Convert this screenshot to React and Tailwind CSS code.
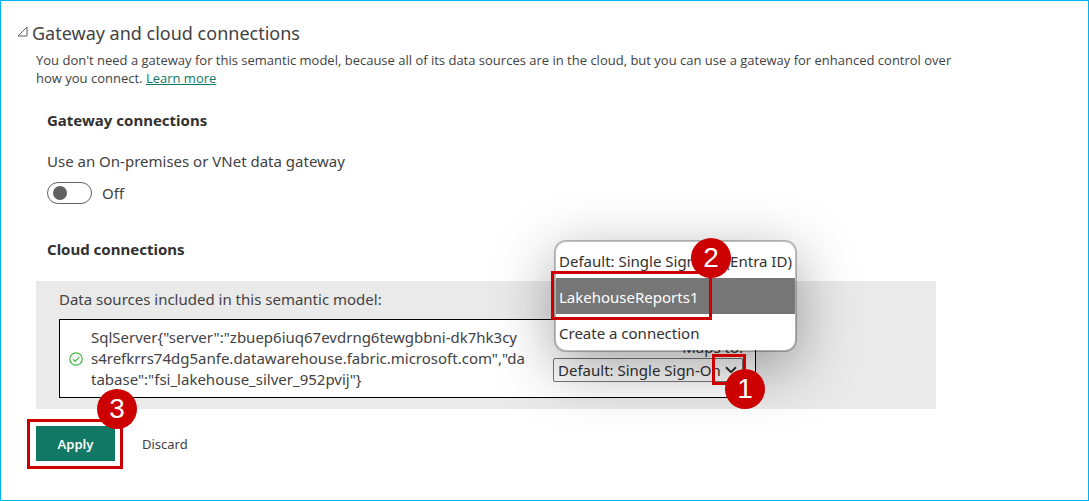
import { useState } from "react";

const CONNECTIONS = [
  "Default: Single Sign-On (Entra ID)",
  "LakehouseReports1",
  "Create a connection",
];

function Badge({ n, className }) {
  return (
    <span
      className={`pointer-events-none absolute z-30 flex size-10 items-center justify-center rounded-full bg-[#cc0000] font-['Liberation_Sans',sans-serif] text-[28px] leading-none text-white ${className}`}
    >
      {n}
    </span>
  );
}

function Frame({ className }) {
  return (
    <span
      className={`pointer-events-none absolute z-20 border-3 border-[#cc0000] ${className}`}
    />
  );
}

function ConnectionPicker() {
  const [active, setActive] = useState(1);
  return (
    <div className="relative w-[190px]">
      <label htmlFor="maps-to" className="block text-right text-[15px] leading-[22px]">
        Maps to:
      </label>
      <select
        id="maps-to"
        className="block h-6 w-full appearance-none rounded-xs border border-[#767676] bg-transparent pl-1 text-[15px] leading-5 text-[#323130]"
      >
        <option>Default: Single Sign-On</option>
      </select>
      <svg
        viewBox="0 0 12 8"
        className="pointer-events-none absolute right-[6px] bottom-[8px] h-2 w-3"
        fill="none"
        stroke="#323130"
        strokeWidth="2"
      >
        <path d="M1 1.2 6 6.2 11 1.2" />
      </svg>
      <Frame className="-right-[3px] -bottom-[3px] h-[31px] w-[34px]" />
      <Badge n={1} className="-right-[22px] -bottom-[27px]" />

      <div
        role="listbox"
        aria-label="Connections"
        className="absolute bottom-[30px] left-px z-10 w-[243px] rounded-xl border-2 border-black/25 bg-white bg-clip-padding shadow-[0_16px_60px_rgba(0,0,0,0.36)]"
      >
        {CONNECTIONS.map((name, i) => (
          <button
            key={name}
            type="button"
            role="option"
            aria-selected={i === active}
            onClick={() => setActive(i)}
            className={`block h-9 w-full pt-0.5 pl-[3px] text-left text-[15px] whitespace-nowrap ${
              i === active ? "bg-[#767676] text-white" : "text-[#323130]"
            }`}
          >
            {name}
          </button>
        ))}
        <Frame className="top-[29px] -left-[5px] h-[49px] w-[161px]" />
        <Badge n={2} className="-top-1 left-[135px]" />
      </div>
    </div>
  );
}

export default function App() {
  const [gateway, setGateway] = useState(false);
  return (
    <main className="min-h-screen border border-[#00b0f0] bg-white pt-5 pr-[152px] pb-8 pl-4 font-['Noto_Sans','Open_Sans',sans-serif] text-[#424242]">
      <h1 className="flex items-center gap-1 text-lg leading-6">
        <svg viewBox="0 0 11 11" className="mb-1 size-[11px]" fill="none" stroke="#606060">
          <path d="M10 1V10H1Z" />
        </svg>
        Gateway and cloud connections
      </h1>

      <p className="mt-[6px] pl-[19px] font-['Open_Sans','Noto_Sans',sans-serif] text-[13px] leading-[18px] lg:whitespace-nowrap">
        You don't need a gateway for this semantic model, because all of its data sources are in the
        cloud, but you can use a gateway for enhanced control over
        <br />
        how you connect.{" "}
        <a href="#learn" className="text-[#117865] underline">
          Learn more
        </a>
      </p>

      <section className="mt-[23px] pl-[30px]">
        <h2 className="text-[15px] leading-5 font-bold text-[#323130]">Gateway connections</h2>
        <p className="mt-[21px] text-[15px] leading-5">Use an On-premises or VNet data gateway</p>
        <label className="mt-[11px] flex w-fit items-center gap-[10px] text-[15px] leading-5">
          <input
            type="checkbox"
            role="switch"
            checked={gateway}
            onChange={(e) => setGateway(e.target.checked)}
            className="peer sr-only"
          />
          <span className="flex h-[22px] w-[45px] items-center rounded-full border border-[#616161] px-[5px] peer-checked:justify-end">
            <span className="size-[14px] rounded-full bg-[#616161]" />
          </span>
          {gateway ? "On" : "Off"}
        </label>
      </section>

      <h2 className="mt-[35px] pl-[30px] text-[15px] leading-5 font-bold text-[#323130]">
        Cloud connections
      </h2>

      <section className="mt-[22px] ml-[19px] bg-[#eaeaea] px-[23px] pt-2 pb-[11px]">
        <h3 className="text-[15px] leading-5">Data sources included in this semantic model:</h3>
        <div className="mt-[10px] flex w-fit items-center border border-black bg-white py-[7px] pr-[12px] pl-[9px]">
          <svg viewBox="0 0 14 14" className="size-[14px] shrink-0" fill="none" stroke="#3fb93f" strokeWidth="1.2">
            <circle cx="7" cy="7" r="6.2" />
            <path d="m4 7.2 2.1 2.1L10.2 5.2" />
          </svg>
          <p className="ml-2 w-[462px] text-[15px] leading-[21px]">
            <span className="block">{'SqlServer{"server":"zbuep6iuq67evdrng6tewgbbni-dk7hk3cy'}</span>
            <span className="block">{'s4refkrrs74dg5anfe.datawarehouse.fabric.microsoft.com","da'}</span>
            <span className="block">{'tabase":"fsi_lakehouse_silver_952pvij"}'}</span>
          </p>
          <div className="self-end pb-2">
            <ConnectionPicker />
          </div>
        </div>
      </section>

      <div className="mt-[17px] ml-[19px] flex items-center gap-[27px] text-[13px]">
        <div className="relative">
          <button type="button" className="block h-[35px] w-[79px] bg-[#117865] pt-[3px] font-semibold text-white">
            Apply
          </button>
          <Frame className="-top-[7px] -left-[9px] h-[50px] w-24" />
          <Badge n={3} className="-top-[37px] left-[61px]" />
        </div>
        <button type="button" className="pt-[3px]">Discard</button>
      </div>
    </main>
  );
}
